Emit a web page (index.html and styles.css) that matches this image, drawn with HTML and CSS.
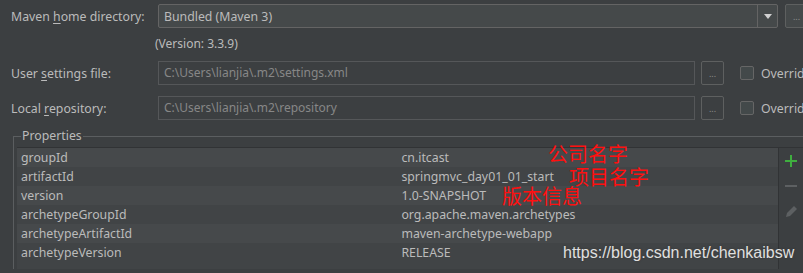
FILE: index.html
```html
<!doctype html>
<html lang="en-us">
	<head>
		<meta charset="utf-8">
		<title>Maven settings</title>
		<link rel="stylesheet" href="styles.css">
	</head>
	<body>
		<div class="form">
			<div class="row">
				<label class="label">Maven <u>h</u>ome directory:</label>
				<div class="combo">
					<span class="combo-text">Bundled (Maven 3)</span>
					<span class="combo-arrow"></span>
				</div>
				<span class="browse browse-wide">...</span>
			</div>
			<div class="version">(Version: 3.3.9)</div>
			<div class="row row-file">
				<label class="label">User <u>s</u>ettings file:</label>
				<div class="field">C:\Users\lianjia\.m2\settings.xml</div>
				<span class="browse">...</span>
				<span class="check"></span>
				<span class="override">Override</span>
			</div>
			<div class="row row-repo">
				<label class="label">Local <u>r</u>epository:</label>
				<div class="field">C:\Users\lianjia\.m2\repository</div>
				<span class="browse">...</span>
				<span class="check"></span>
				<span class="override">Override</span>
			</div>
		</div>
		<fieldset class="props">
			<legend>Properties</legend>
			<div class="props-body">
				<table class="grid">
					<tr><td class="key">groupId</td><td>cn.itcast</td></tr>
					<tr><td class="key">artifactId</td><td>springmvc_day01_01_start</td></tr>
					<tr><td class="key">version</td><td>1.0-SNAPSHOT</td></tr>
					<tr><td class="key">archetypeGroupId</td><td>org.apache.maven.archetypes</td></tr>
					<tr><td class="key">archetypeArtifactId</td><td>maven-archetype-webapp</td></tr>
					<tr><td class="key">archetypeVersion</td><td>RELEASE</td></tr>
				</table>
				<div class="tools">
					<svg class="tool" width="14" height="14" viewBox="0 0 14 14"><path d="M7 1v12M1 7h12" stroke="#3fae3f" stroke-width="2"/></svg>
					<svg class="tool" width="14" height="14" viewBox="0 0 14 14"><path d="M1 7h12" stroke="#5d6062" stroke-width="2"/></svg>
					<svg class="tool" width="14" height="14" viewBox="0 0 14 14"><path d="M2 13l1-4 7-7 3 3-7 7z" fill="#5d6062"/></svg>
				</div>
				<div class="note note-company">公司名字</div>
				<div class="note note-project">项目名字</div>
				<div class="note note-version">版本信息</div>
				<div class="watermark">https://blog.csdn.net/chenkaibsw</div>
			</div>
		</fieldset>
	</body>
</html>
```

FILE: styles.css
```css
html, body {
	margin: 0;
	background-color: #3c3f41;
	color: #bbbbbb;
	font-family: "Noto Sans", "Open Sans", sans-serif;
	font-size: 12px;
	overflow: hidden;
}
u {
	text-decoration-thickness: 1px;
	text-underline-offset: 2px;
}
.form {
	padding-top: 4px;
}
.row {
	display: flex;
	align-items: center;
	height: 24px;
	white-space: nowrap;
}
.row-file {
	margin-top: 9px;
}
.row-repo {
	margin-top: 11px;
}
.label {
	flex: 0 0 158px;
	padding-left: 11px;
	box-sizing: border-box;
	font-size: 12.3px;
}
.combo {
	flex: 0 0 620px;
	height: 24px;
	box-sizing: border-box;
	border: 1px solid #646464;
	border-radius: 2px;
	background-color: #45494a;
	display: flex;
	align-items: center;
}
.combo-text {
	flex: 1;
	padding-left: 5px;
	font-size: 12.3px;
}
.combo-arrow {
	width: 19px;
	height: 22px;
	border-left: 1px solid #646464;
	position: relative;
}
.combo-arrow::after {
	content: "";
	position: absolute;
	left: 6px;
	top: 9px;
	border-left: 4px solid transparent;
	border-right: 4px solid transparent;
	border-top: 5px solid #d0d0d0;
}
.browse {
	flex: 0 0 23px;
	height: 24px;
	box-sizing: border-box;
	margin-left: 6px;
	border: 1px solid #5e6060;
	border-radius: 2px;
	color: #8c8c8c;
	font-size: 9px;
	line-height: 24px;
	text-align: center;
}
.browse-wide {
	margin-left: 7px;
	background-color: #45494a;
}
.version {
	margin-top: 8px;
	padding-left: 155px;
	height: 16px;
	line-height: 16px;
}
.field {
	flex: 0 0 537px;
	height: 24px;
	box-sizing: border-box;
	border: 1px solid #555759;
	padding-left: 5px;
	line-height: 22px;
	color: #878787;
}
.check {
	flex: 0 0 14px;
	height: 14px;
	box-sizing: border-box;
	margin-left: 16px;
	border: 1px solid #666;
	border-radius: 2px;
	background-color: #43494a;
}
.override {
	margin-left: 7px;
	font-size: 12.3px;
}

.props {
	margin: 8px 0 0 13px;
	padding: 0 0 0 3px;
	border: 1px solid #5b5e60;
	border-right: none;
	border-bottom: none;
	height: 140px;
}
.props legend {
	padding: 0 1px;
	margin-left: 4px;
	line-height: 16px;
	font-size: 12.3px;
}
.props-body {
	position: relative;
	display: flex;
	margin-top: 3px;
	height: 130px;
	border-top: 1px solid #313335;
}
.grid {
	flex: 0 0 762px;
	border-collapse: collapse;
	border-right: 1px solid #313335;
	align-self: stretch;
	display: block;
	background-color: #414446;
	font-size: 12.3px;
}
.grid tr {
	height: 19px;
}
.grid tr:nth-child(odd) {
	background-color: #46494b;
}
.grid td {
	padding: 0 0 0 4px;
	line-height: 19px;
	white-space: nowrap;
}
.grid td.key {
	width: 377px;
}
.grid td + td {
	width: 377px;
}
.tools {
	display: flex;
	flex-direction: column;
	align-items: center;
	gap: 11px;
	width: 24px;
	padding-top: 6px;
}
.note {
	position: absolute;
	color: #ff1010;
	font-family: "Noto Sans CJK SC", sans-serif;
	font-size: 20px;
	line-height: 18px;
}
.note-company {
	left: 531px;
	top: -3px;
}
.note-project {
	left: 552px;
	top: 20px;
}
.note-version {
	left: 485px;
	top: 39px;
}
.watermark {
	position: absolute;
	left: 546px;
	top: 96px;
	color: #e0e0e0;
	font-family: "Liberation Sans", Arial, sans-serif;
	font-size: 16px;
	text-shadow: 0 0 2px #333;
}
```
